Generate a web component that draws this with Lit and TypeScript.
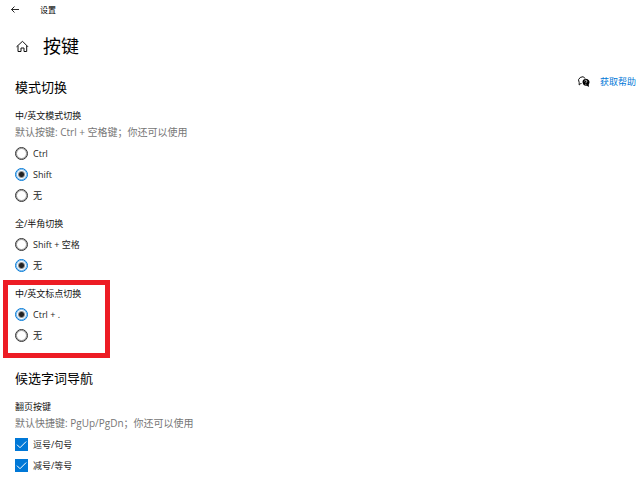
import { LitElement, html, css, svg, nothing } from "lit";
import { customElement, property } from "lit/decorators.js";

interface Option {
  label: string;
  checked?: boolean;
}

@customElement("option-group")
class OptionGroup extends LitElement {
  @property() heading = "";
  @property() hint = "";
  @property() kind: "radio" | "checkbox" = "radio";
  @property({ attribute: false }) options: Option[] = [];

  static styles = css`
    :host {
      display: block;
      width: fit-content;
    }
    .heading,
    .hint {
      margin: 0;
      line-height: 17px;
      white-space: nowrap;
      font-weight: 400;
    }
    .heading {
      font-size: 9px;
      color: #111;
    }
    .hint {
      font-size: 10px;
      color: #767676;
    }
    .options {
      margin-top: 2px;
    }
    .option {
      display: flex;
      align-items: center;
      gap: 5px;
      height: 21px;
      font-size: 9px;
      color: #1c1c1c;
      white-space: nowrap;
    }
    .control {
      appearance: none;
      box-sizing: border-box;
      flex: none;
      width: 13px;
      height: 13px;
      margin: 0;
      border: 1px solid #333;
    }
    .radio {
      border-radius: 50%;
      box-shadow: inset 0 0 0 1px #33333377;
    }
    .radio:checked {
      border-color: #0078d7;
      box-shadow: inset 0 0 0 1px #0078d777;
      background: radial-gradient(circle, #222 0 2px, transparent 4px);
    }
    .checkbox:checked {
      border-color: #0078d7;
      background: #0078d7;
    }
    .box {
      display: grid;
    }
    .box > * {
      grid-area: 1 / 1;
    }
    .tick {
      width: 13px;
      height: 13px;
      fill: none;
      stroke: #fff;
      pointer-events: none;
    }
  `;

  render() {
    return html`
      <div role="group" aria-labelledby="heading">
        <h3 class="heading" id="heading">${this.heading}</h3>
        ${this.hint ? html`<p class="hint">${this.hint}</p>` : nothing}
        <div class="options">
          ${this.options.map(
            (o) => html`
              <label class="option">
                <span class="box">
                  <input class="control ${this.kind}" type=${this.kind} name="choice" .checked=${!!o.checked} />
                  ${this.kind === "checkbox"
                    ? html`<svg class="tick" viewBox="0 0 13 13" aria-hidden="true">
                        ${svg`<path d="M2 6.7 5 9.7 11.2 3.5" />`}
                      </svg>`
                    : nothing}
                </span>
                <span>${o.label}</span>
              </label>
            `
          )}
        </div>
      </div>
    `;
  }
}

@customElement("app-root")
class AppRoot extends LitElement {
  static styles = css`
    :host {
      display: block;
      min-height: 100vh;
      background: #fff;
      color: #000;
      font-family: "Open Sans", "Noto Sans CJK SC", sans-serif;
      overflow: hidden;
    }
    .titlebar {
      display: flex;
      align-items: center;
      gap: 20px;
      height: 18px;
      padding-left: 10px;
      font-size: 8px;
    }
    .back {
      display: flex;
      padding: 0;
      border: 0;
      background: none;
    }
    .back svg {
      width: 10px;
      height: 10px;
    }
    .line {
      fill: none;
      stroke: #111;
    }
    .header {
      display: flex;
      align-items: center;
      gap: 14px;
      height: 56px;
      padding-left: 15px;
    }
    .home {
      width: 14px;
      height: 14px;
    }
    .title {
      margin: 0;
      font-size: 18px;
      font-weight: 400;
      line-height: 26px;
    }
    .body {
      display: flex;
      justify-content: space-between;
      align-items: flex-start;
      padding: 0 3px 0 15px;
    }
    .content {
      padding-top: 3px;
    }
    .section + .section {
      margin-top: 22px;
    }
    .subtitle {
      margin: 0 0 10px;
      font-size: 13px;
      font-weight: 400;
      line-height: 20px;
    }
    .groups {
      display: flex;
      flex-direction: column;
      gap: 9px;
    }
    .marked {
      position: relative;
    }
    .marked::after {
      content: "";
      position: absolute;
      inset: -5px -29px -12px -12px;
      border: 5px solid #ed1c24;
      pointer-events: none;
    }
    .help {
      display: flex;
      align-items: center;
      gap: 10px;
      padding-top: 2px;
      font-size: 9px;
      line-height: 12px;
      color: #0078d7;
      text-decoration: none;
    }
    .help svg {
      width: 12px;
      height: 12px;
    }
  `;

  render() {
    return html`
      <header>
        <div class="titlebar">
          <button class="back" aria-label="返回">
            <svg viewBox="0 0 10 10" class="line"><path d="M9 5.500H1.500M4.500 2.500 1.500 5.500l3 3" stroke-width=".9" /></svg>
          </button>
          <span>设置</span>
        </div>
        <div class="header">
          <svg class="home line" viewBox="0 0 14 14" aria-hidden="true">
            <path d="M1.500 7.800 7.500 2.300l5.500 5.500M3 6.800V12.500H6V9H9V12.500H11.700V6.800" />
          </svg>
          <h1 class="title">按键</h1>
        </div>
      </header>
      <main class="body">
        <div class="content">
          <section class="section">
            <h2 class="subtitle">模式切换</h2>
            <div class="groups">
              <option-group
                heading="中/英文模式切换"
                hint="默认按键: Ctrl + 空格键；你还可以使用"
                .options=${[{ label: "Ctrl" }, { label: "Shift", checked: true }, { label: "无" }]}
              ></option-group>
              <option-group
                heading="全/半角切换"
                .options=${[{ label: "Shift + 空格" }, { label: "无", checked: true }]}
              ></option-group>
              <option-group
                class="marked"
                heading="中/英文标点切换"
                .options=${[{ label: "Ctrl + .", checked: true }, { label: "无" }]}
              ></option-group>
            </div>
          </section>
          <section class="section">
            <h2 class="subtitle">候选字词导航</h2>
            <option-group
              kind="checkbox"
              heading="翻页按键"
              hint="默认快捷键: PgUp/PgDn；你还可以使用"
              .options=${[
                { label: "逗号/句号", checked: true },
                { label: "减号/等号", checked: true },
              ]}
            ></option-group>
          </section>
        </div>
        <a class="help" href="#help">
          <svg viewBox="0 0 12 12" aria-hidden="true">
            <path d="M3.500 7.500H2.800L1.200 9V6.500A3.200 3.200 0 1 1 7.300 2.500" fill="none" stroke="#111" />
            <path d="M7.700 2.700a3.700 3.500 0 0 1 3.100 5.500V11L9 9.700a3.700 3.500 0 1 1-1.300-7Z" fill="#000" />
            <path d="M6.700 5.300a1.100 1 0 1 1 1.700.8q-.6.300-.6.900M7.800 7.800v.9" fill="none" stroke="#fff" stroke-width=".8" />
          </svg>
          <span>获取帮助</span>
        </a>
      </main>
    `;
  }
}
